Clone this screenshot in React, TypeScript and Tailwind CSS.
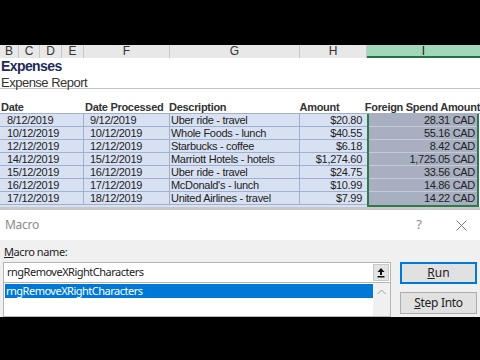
import React from "react";

const rows = [
  ["8/12/2019", "9/12/2019", "Uber ride - travel", "$20.80", "28.31 CAD"],
  ["10/12/2019", "10/12/2019", "Whole Foods - lunch", "$40.55", "55.16 CAD"],
  ["12/12/2019", "12/12/2019", "Starbucks - coffee", "$6.18", "8.42 CAD"],
  ["14/12/2019", "15/12/2019", "Marriott Hotels - hotels", "$1,274.60", "1,725.05 CAD"],
  ["15/12/2019", "16/12/2019", "Uber ride - travel", "$24.75", "33.56 CAD"],
  ["16/12/2019", "17/12/2019", "McDonald's - lunch", "$10.99", "14.86 CAD"],
  ["17/12/2019", "18/12/2019", "United Airlines - travel", "$7.99", "14.22 CAD"],
];

const cols = [
  { l: "B", w: 19 },
  { l: "C", w: 21 },
  { l: "D", w: 22 },
  { l: "E", w: 22 },
  { l: "F", w: 86 },
  { l: "G", w: 130 },
  { l: "H", w: 67 },
];

export default function App() {
  return (
    <div className="w-[480px] h-[360px] overflow-hidden bg-white flex flex-col" style={{ fontFamily: '"Liberation Sans", Arial, sans-serif' }}>
      <div className="h-[45px] bg-black shrink-0" />
      {/* column headers */}
      <div className="h-[13px] flex shrink-0 text-[12px] leading-[13px] text-[#333]">
        {cols.map((c) => (
          <div key={c.l} className="bg-[#e8e8e8] border-r border-[#c8c8c8] text-center" style={{ width: c.w }}>
            {c.l}
          </div>
        ))}
        <div className="flex-1 bg-[#a2d7b9] border-b-2 border-[#217346] text-center leading-[12px] text-[#222]">I</div>
      </div>
      {/* title */}
      <div className="h-[16px] shrink-0 pl-[1px] text-[14px] leading-[17px] font-bold text-[#1f2b5a] tracking-[-0.6px]">Expenses</div>
      <div className="h-[15px] shrink-0 pl-[1px] text-[13px] leading-[17px] text-[#333] tracking-[-0.5px] border-b border-[#c4c4c4]">Expense Report</div>
      <div className="h-[12px] shrink-0" />
      {/* header row */}
      <div className="h-[13px] shrink-0 flex text-[11px] leading-[13px] font-bold text-[#333] tracking-[-0.3px] border-b border-[#9fb0d0]">
        <div className="w-[84px] pl-[1px]">Date</div>
        <div className="w-[86px] pl-[2px]">Date Processed</div>
        <div className="w-[130px] pl-[1px]">Description</div>
        <div className="w-[67px] pl-[3px]">Amount</div>
        <div className="flex-1 pl-[2px] whitespace-nowrap">Foreign Spend Amount</div>
      </div>
      {/* data */}
      <div className="flex shrink-0 text-[11px] leading-[12px] text-[#222] tracking-[-0.3px]">
        <div className="w-[367px] flex flex-col bg-[#d8e1f2]">
          {rows.map((r, i) => (
            <div key={i} className="h-[13px] flex border-b border-[#9fb0d0]">
              <div className="w-[84px] pl-[7px] border-r border-[#9fb0d0]">{r[0]}</div>
              <div className="w-[86px] pl-[6px] border-r border-[#9fb0d0]">{r[1]}</div>
              <div className="w-[130px] pl-[1px] border-r border-[#9fb0d0] whitespace-nowrap">{r[2]}</div>
              <div className="w-[67px] pr-[5px] text-right">{r[3]}</div>
            </div>
          ))}
        </div>
        <div className="w-[112px] flex flex-col border-2 border-[#2d7a4b] border-t-0 bg-[#a7afc0]">
          {rows.map((r, i) => (
            <div key={i} className={`h-[13px] pr-[2px] text-right ${i < rows.length - 1 ? "border-b border-[#c4cbd8]" : ""}`}>{r[4]}</div>
          ))}
        </div>
        <div className="flex-1" />
      </div>
      <div className="h-[3px] shrink-0 bg-[#c8c8c8]" />
      {/* dialog */}
      <div className="flex-1 flex flex-col" style={{ fontFamily: '"Noto Sans", "Open Sans", sans-serif' }}>
        <div className="h-[30px] shrink-0 bg-white flex items-center pl-[5px] pr-[12px]">
          <span className="text-[12px] text-[#8a8a8a] tracking-[-0.3px]">Macro</span>
          <span className="ml-auto text-[13px] text-[#8a8a8a] mr-[34px]">?</span>
          <svg width="11" height="11" viewBox="0 0 11 11" className="mr-[1px]">
            <path d="M0.5 0.5 L10.5 10.5 M10.5 0.5 L0.5 10.5" stroke="#777" strokeWidth="1" />
          </svg>
        </div>
        <div className="h-[77px] shrink-0 bg-[#f0f0f0] flex">
          <div className="w-[388px] ml-[3px] flex flex-col">
            <div className="h-[22px] pl-[1px] pt-[5px] text-[11px] leading-[14px] text-[#222] tracking-[-0.4px]">
              <span className="underline underline-offset-1">M</span>acro name:
            </div>
            <div className="h-[21px] bg-white border border-[#b5b5b5] flex items-center">
              <span className="pl-[3px] text-[11px] text-[#222] tracking-[-0.5px]">rngRemoveXRightCharacters</span>
              <div className="ml-auto w-[16px] h-[17px] mr-[1px] bg-[#e4e4e4] border border-[#c8c8c8] flex items-center justify-center">
                <svg width="8" height="11" viewBox="0 0 8 11">
                  <path d="M4 1 L7.5 5 L5 5 L5 8 L3 8 L3 5 L0.5 5 Z" fill="#111" />
                  <rect x="0.5" y="9" width="7" height="1.5" fill="#111" />
                </svg>
              </div>
            </div>
            <div className="flex-1 bg-white border border-t-0 border-[#b5b5b5] flex">
              <div className="flex-1">
                <div className="h-[14px] mt-[1px] ml-[1px] bg-[#0078d7] text-white text-[11px] leading-[14px] pl-[1px] tracking-[-0.5px]">rngRemoveXRightCharacters</div>
              </div>
              <div className="w-[17px] bg-[#f0f0f0] flex justify-center pt-[6px]">
                <svg width="9" height="6" viewBox="0 0 9 6">
                  <path d="M0.5 5 L4.5 1 L8.5 5" stroke="#a0a0a0" strokeWidth="1" fill="none" />
                </svg>
              </div>
            </div>
          </div>
          <div className="ml-[9px] w-[77px] flex flex-col pt-[22px] gap-[8px]">
            <div className="h-[22px] bg-[#e1e1e1] border-2 border-[#0078d7] flex items-center justify-center text-[12px] text-[#222]">
              <span><span className="underline underline-offset-1">R</span>un</span>
            </div>
            <div className="h-[22px] bg-[#e1e1e1] border border-[#adadad] flex items-center justify-center text-[12px] text-[#222] tracking-[-0.3px]">
              <span><span className="underline underline-offset-1">S</span>tep Into</span>
            </div>
          </div>
        </div>
        <div className="flex-1 bg-black" />
      </div>
    </div>
  );
}
